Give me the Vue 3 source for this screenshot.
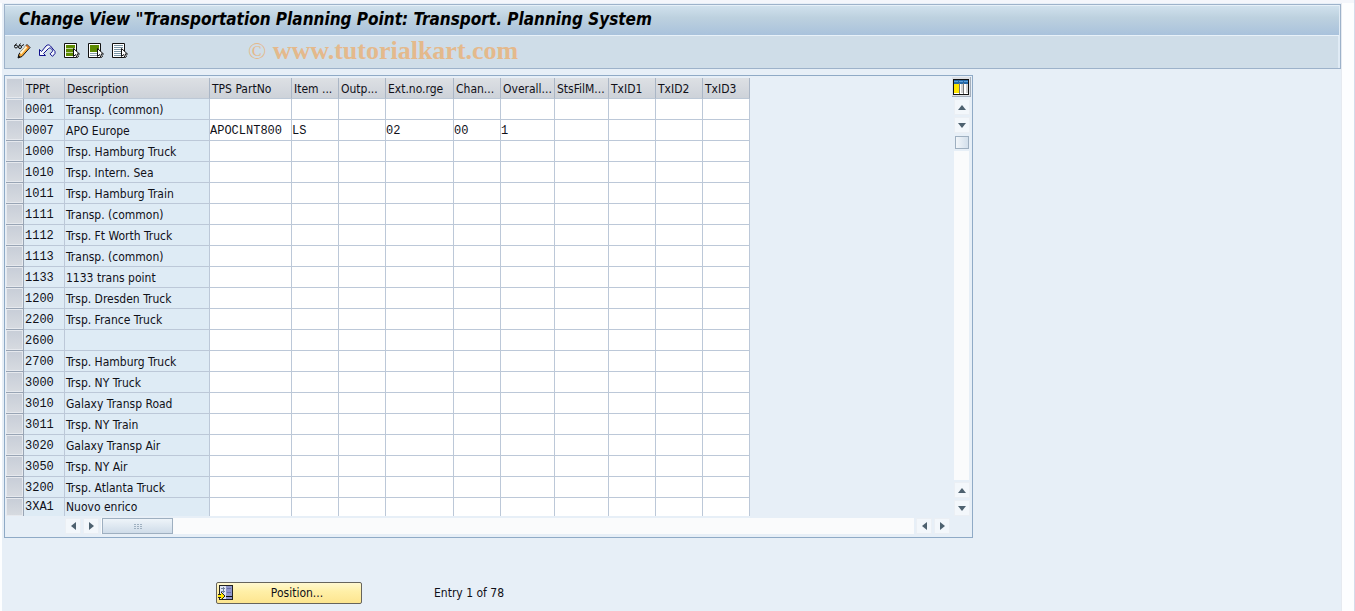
<script setup>
import { ref } from 'vue'

const columns = [
  { label: 'TPS PartNo', name: 'TPS PartNo', cls: 'c-part' },
  { label: 'Item ...', name: 'Item category', cls: 'c-47' },
  { label: 'Outp...', name: 'Output', cls: 'c-47' },
  { label: 'Ext.no.rge', name: 'External number range', cls: 'c-ext' },
  { label: 'Chan...', name: 'Change', cls: 'c-47' },
  { label: 'Overall...', name: 'Overall', cls: 'c-54' },
  { label: 'StsFilM...', name: 'Status filter', cls: 'c-54' },
  { label: 'TxID1', name: 'TxID1', cls: 'c-47' },
  { label: 'TxID2', name: 'TxID2', cls: 'c-47' },
  { label: 'TxID3', name: 'TxID3', cls: 'c-47' },
]

const source = [
  ['0001', 'Transp. (common)'],
  ['0007', 'APO Europe', ['APOCLNT800', 'LS', '', '02', '00', '1']],
  ['1000', 'Trsp. Hamburg Truck'],
  ['1010', 'Trsp. Intern. Sea'],
  ['1011', 'Trsp. Hamburg Train'],
  ['1111', 'Transp. (common)'],
  ['1112', 'Trsp. Ft Worth Truck'],
  ['1113', 'Transp. (common)'],
  ['1133', '1133 trans point'],
  ['1200', 'Trsp. Dresden Truck'],
  ['2200', 'Trsp. France Truck'],
  ['2600', ''],
  ['2700', 'Trsp. Hamburg Truck'],
  ['3000', 'Trsp. NY Truck'],
  ['3010', 'Galaxy Transp Road'],
  ['3011', 'Trsp. NY Train'],
  ['3020', 'Galaxy Transp Air'],
  ['3050', 'Trsp. NY Air'],
  ['3200', 'Trsp. Atlanta Truck'],
  ['3XA1', 'Nuovo enrico'],
]

const rows = ref(
  source.map(([id, text, values = []]) => ({
    id,
    text,
    cells: columns.map((_, i) => values[i] ?? ''),
  }))
)
</script>

<template>
  <div class="page">
    <main class="window">
      <header class="head">
        <h1>Change View "Transportation Planning Point: Transport. Planning System</h1>
        <div class="toolbar">
          <button type="button" aria-label="Display / Change">
            <svg width="17" height="16" viewBox="0 0 17 16">
              <g fill="none" stroke="#111">
                <path d="M2.500 .5L.5 3M6.500 .5L5 2.500" />
                <circle cx="2" cy="3.500" r="1.500" />
                <circle cx="6" cy="4" r="1.500" />
                <path d="M7.500 3L10 1.500" />
              </g>
              <path d="M13 1.500l3 3-8 9-4 1.500 1-4z" fill="#f7a733" stroke="#111" />
              <path d="M12.500 3.500L6.500 10.500" stroke="#fff3cc" stroke-width="2" />
              <path d="M4.500 12l2 2-2.500 1z" fill="#111" />
              <path d="M13 2l2.500 2.500-1 1L12 3z" fill="#e0762c" />
            </svg>
          </button>
          <button type="button" aria-label="Undo change">
            <svg width="17" height="14" viewBox="0 0 17 14">
              <path d="M.5 5.500v6h6l-2-2 5-5c1-1 2-.6 3 .4s1.500 2 .5 3l-2 2 2.500 2.500L16 9.500V7.500L11.500 2C10 .5 8.500 .5 7 2L2.500 7.500z" fill="#f2f6fc" stroke="#10108c" />
            </svg>
          </button>
          <button type="button" aria-label="Select all">
            <svg width="16" height="16" viewBox="0 0 16 16">
              <path d="M.5.5h12v14H.5z" fill="#fff" stroke="#111" />
              <path d="M2 2h9v3H2zM2 6h9v3H2zM2 10h9v3H2z" fill="#5c8a00" />
              <path d="M2 5h9v1H2zM2 9h9v1H2z" fill="#c3d3a0" />
              <path d="M9.500 5.500v8l2-2 1.500 3 1.500-1-1.500-2.500h2.500z" fill="#fff" stroke="#111" />
            </svg>
          </button>
          <button type="button" aria-label="Select block">
            <svg width="16" height="16" viewBox="0 0 16 16">
              <path d="M.5.5h12v14H.5z" fill="#fff" stroke="#111" />
              <path d="M2 2h9v7H2z" fill="#5c8a00" />
              <path d="M2 10h9v1H2zM2 12h9v1H2z" fill="#8aa0ac" />
              <path d="M9.500 5.500v8l2-2 1.500 3 1.500-1-1.500-2.500h2.500z" fill="#fff" stroke="#111" />
            </svg>
          </button>
          <button type="button" aria-label="Deselect all">
            <svg width="16" height="16" viewBox="0 0 16 16">
              <path d="M.5.5h12v14H.5z" fill="#fff" stroke="#111" />
              <path d="M2 2h9v1H2zM2 4h9v1H2zM2 6h9v1H2zM2 8h9v1H2zM2 10h9v1H2zM2 12h9v1H2z" fill="#7894a4" />
              <path d="M9.500 5.500v8l2-2 1.500 3 1.500-1-1.500-2.500h2.500z" fill="#fff" stroke="#111" />
            </svg>
          </button>
          <span class="watermark"><span class="copy">©</span> www.tutorialkart.com</span>
        </div>
      </header>

      <section class="panel">
        <div class="body">
          <table>
            <colgroup>
              <col class="c-sel" /><col class="c-id" /><col class="c-desc" />
              <col v-for="c in columns" :key="c.name" :class="c.cls" />
            </colgroup>
            <thead>
              <tr>
                <th><button type="button" class="sel" aria-label="Select all rows"></button></th>
                <th scope="col">TPPt</th>
                <th scope="col">Description</th>
                <th v-for="c in columns" :key="c.name" scope="col">{{ c.label }}</th>
              </tr>
            </thead>
            <tbody>
              <tr v-for="row in rows" :key="row.id">
                <td class="pick"><button type="button" class="sel" :aria-label="'Select row ' + row.id"></button></td>
                <td class="key mono">{{ row.id }}</td>
                <td class="key desc">{{ row.text }}</td>
                <td v-for="(c, i) in columns" :key="c.name">
                  <input v-model="row.cells[i]" type="text" :aria-label="c.name + ' ' + row.id" />
                </td>
              </tr>
            </tbody>
          </table>
          <div class="side">
            <button type="button" class="config" aria-label="Table settings">
              <svg width="16" height="16" viewBox="0 0 16 16" shape-rendering="crispEdges">
                <path d="M0 0h16v16H0z" fill="#111" />
                <path d="M1 1h14v14H1z" fill="#fff" />
                <path d="M1 1h14v4H1z" fill="#2468a8" />
                <path d="M1 2h4v1H1zM6 2h4v1H6zM11 2h4v1h-4z" fill="#5ca0dc" />
                <path d="M1 5h5v9H1z" fill="#ffe600" />
                <path d="M8 5h2v9H8zM13 5h2v9h-2z" fill="#d0d0d0" />
                <path d="M6 4h1v11H6zM10 4h1v11h-1z" fill="#777" />
              </svg>
            </button>
            <button type="button" class="arrow" aria-label="Scroll up"><i class="tri up"></i></button>
            <button type="button" class="arrow" aria-label="Page down"><i class="tri down"></i></button>
            <div class="vthumb"></div>
            <div class="vtrack"></div>
            <button type="button" class="arrow" aria-label="Page up"><i class="tri up"></i></button>
            <button type="button" class="arrow" aria-label="Scroll down"><i class="tri down"></i></button>
          </div>
        </div>
        <div class="hscroll">
          <button type="button" class="arrow" aria-label="Scroll left"><i class="tri left"></i></button>
          <button type="button" class="arrow" aria-label="Page right"><i class="tri right"></i></button>
          <div class="htrack">
            <div class="hthumb">
              <svg width="8" height="5" viewBox="0 0 8 5" shape-rendering="crispEdges">
                <path d="M0 0h2v1H0zM3 0h2v1H3zM6 0h2v1H6zM0 2h2v1H0zM3 2h2v1H3zM6 2h2v1H6zM0 4h2v1H0zM3 4h2v1H3zM6 4h2v1H6z" fill="#9fb0c0" />
              </svg>
            </div>
          </div>
          <button type="button" class="arrow" aria-label="Page left"><i class="tri left"></i></button>
          <button type="button" class="arrow" aria-label="Scroll right"><i class="tri right"></i></button>
        </div>
      </section>

      <footer class="foot">
        <button type="button" class="position">
          <svg width="16" height="16" viewBox="0 0 16 16" shape-rendering="crispEdges">
            <path d="M1 0h14v15H1z" fill="#222" />
            <path d="M2 1h12v13H2z" fill="#dfe6f4" />
            <path d="M8 1h6v13H8z" fill="#8f96cc" />
            <path d="M9 3h4v1H9zM9 7h4v1H9z" fill="#6870a8" />
            <path d="M8 11h6v1H8z" fill="#111" />
            <path d="M3 3h4v1H3zM5 2h1v3H5zM3 6h4v1H3zM5 5h1v3H5z" fill="#70809a" />
            <path d="M0 9h3V7h1v1h1v1h1v1h1v2H6v1H5v1H4v1H3v-2H0z" fill="#222" />
            <path d="M0 10h3V8h1v1h1v1h1v2H5v1H4v1H3v-2H0z" fill="#ffe600" />
          </svg>
          <span>Position...</span>
        </button>
        <span>Entry 1 of 78</span>
      </footer>
    </main>
  </div>
</template>

<style>
body {
  margin: 0;
  background: #fdfeff;
}
</style>

<style scoped>
* {
  box-sizing: border-box;
}
.page {
  min-height: 100vh;
  padding: 3px 12px 0 2px;
  border-right: 1px solid #d5dbea;
  background: linear-gradient(#f4f6fb 3px, #fdfeff 3px);
  font: 12px/16px 'DejaVu Sans Condensed', 'Noto Sans', sans-serif;
  color: #101018;
  display: flex;
}
.window {
  flex: 1;
  min-width: 0;
  padding: 1px 0 6px 2px;
  border-right: 1px solid #e6eaf0;
  background: #e7eff7;
}
button {
  padding: 0;
  border: 0;
  background: none;
  font: inherit;
  color: inherit;
}
svg {
  display: block;
}
.head {
  border: 1px solid #9db2ca;
  background: #cfdde8;
  box-shadow: inset -2px 0 #e0ebf5;
}
h1 {
  margin: 0 1px 0 0;
  height: 31px;
  padding: 0 14px;
  border-top: 1px solid #e6f0f8;
  border-bottom: 1px solid #e8f1f9;
  background: linear-gradient(#d0e1ed, #bdd1df 40%, #a9c2dc);
  font: italic bold 17px/26px 'DejaVu Sans Condensed', 'Noto Sans', sans-serif;
  color: #000;
  white-space: nowrap;
}
.toolbar {
  display: flex;
  align-items: center;
  gap: 8px;
  height: 32px;
  padding: 0 9px 2px;
}
.watermark {
  margin-left: 112px;
  font: bold 26px/30px 'Liberation Serif', serif;
  color: #e4b98c;
  white-space: nowrap;
}
.copy {
  font-size: 24px;
  font-weight: normal;
}
.panel {
  max-width: 969px;
  margin-top: 6px;
  padding: 1px;
  border: 1px solid #8faac6;
}
.body {
  display: flex;
  justify-content: space-between;
}
table {
  width: 744px;
  margin-top: 1px;
  table-layout: fixed;
  border-collapse: separate;
  border-spacing: 0;
}
.c-sel { width: 18px; }
.c-id { width: 41px; }
.c-desc { width: 145px; }
.c-part { width: 82px; }
.c-47 { width: 47px; }
.c-ext { width: 68px; }
.c-54 { width: 54px; }
th {
  height: 21px;
  padding: 2px 0 0 2px;
  border-right: 1px solid #aab6c6;
  border-bottom: 1px solid #bcc8d6;
  background: linear-gradient(#dde0e4, #cdd2d9);
  font-weight: normal;
  text-align: left;
  white-space: nowrap;
}
th:first-child,
td.pick {
  padding: 0;
}
td {
  height: 21px;
  padding: 2px 0 0;
  border-right: 1px solid #bcc8d8;
  border-bottom: 1px solid #bcc8d8;
  background: #fff;
  white-space: nowrap;
}
tbody tr:last-child td {
  height: 18px;
  padding-top: 0;
  border-bottom: 0;
}
td.key {
  padding-left: 1px;
  background: #deebf5;
}
tbody td.pick {
  border-color: #98a4b4;
}
.sel {
  display: block;
  width: 100%;
  height: 20px;
  border: 1px solid #e6e9ee;
  background: linear-gradient(#c8ced8, #d6dae0);
}
tbody tr:last-child .sel {
  height: 18px;
}
.mono,
input {
  font: 12px/16px 'Liberation Mono', monospace;
}
input {
  display: block;
  width: 100%;
  height: 16px;
  padding: 0;
  border: 0;
  outline: 0;
  background: transparent;
  color: #101018;
}
.side {
  display: flex;
  flex-direction: column;
  align-items: center;
  gap: 2px;
  width: 19px;
}
.config {
  display: grid;
  place-items: center;
  width: 19px;
  height: 20px;
  border-right: 1px solid #a5afbc;
  border-bottom: 1px solid #a5afbc;
  background: #dde0e5;
}
.arrow {
  display: grid;
  place-items: center;
  flex: none;
  width: 16px;
  height: 16px;
  border: 1px solid #ebeff4;
  background: #f3f7fb;
}
.tri {
  border: 4px solid transparent;
}
.up { border-top: 0; border-bottom: 5px solid #4e616f; }
.down { border-bottom: 0; border-top: 5px solid #4e616f; }
.left { border-left: 0; border-right: 5px solid #4e616f; }
.right { border-right: 0; border-left: 5px solid #4e616f; }
.vthumb {
  width: 14px;
  height: 13px;
  margin-top: 1px;
  border: 1px solid #9eafc0;
  background: linear-gradient(90deg, #f2f6fa, #d3dfeb);
}
.vtrack {
  flex: 1;
  width: 15px;
  background: #fafbfc;
}
.hscroll {
  display: flex;
  align-items: center;
  gap: 2px;
  padding: 2px 21px 2px 59px;
}
.htrack {
  flex: 1;
  padding-left: 1px;
  background: #fafbfc;
}
.hthumb {
  display: grid;
  place-items: center;
  width: 71px;
  height: 16px;
  border: 1px solid #9eafc0;
  background: linear-gradient(#eef4f9, #cfdce9);
}
.foot {
  display: flex;
  align-items: center;
  gap: 72px;
  margin-top: 44px;
  padding-left: 212px;
}
.position {
  display: flex;
  align-items: center;
  width: 146px;
  height: 22px;
  padding: 0 1px;
  border: 1px solid #66645c;
  border-radius: 2px;
  background: linear-gradient(#fff8d0, #fff0a8 40%, #fde58f);
}
.position span {
  flex: 1;
  text-align: center;
}
</style>
